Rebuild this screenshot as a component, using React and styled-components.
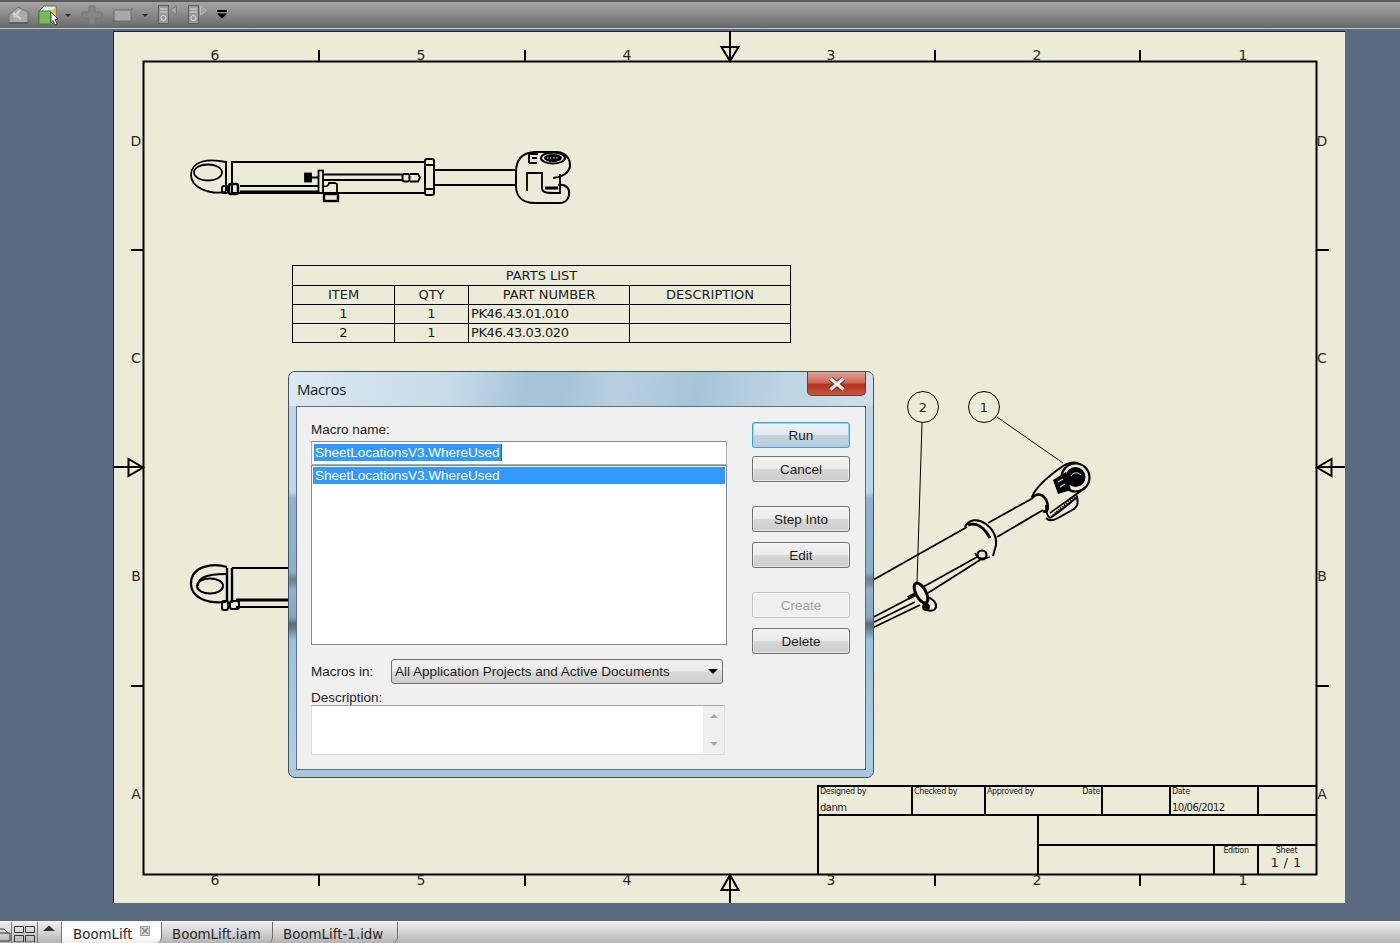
import React from 'react'
import styled, { createGlobalStyle } from 'styled-components'

const Global = createGlobalStyle`
  html, body { margin: 0; padding: 0; height: 100%; overflow: hidden; }
  #root { height: 100%; }
`;

const CAD_FONT = '"DejaVu Sans", Tahoma, sans-serif';
const UI_FONT = '"Liberation Sans", Arial, sans-serif';

const Window = styled.div`
  display: flex;
  flex-direction: column;
  width: 1400px;
  height: 943px;
  background: #5a6a7f;
  overflow: hidden;
`;

const Toolbar = styled.div`
  display: flex;
  align-items: flex-start;
  flex: none;
  box-sizing: border-box;
  height: 29px;
  padding: 3px 0 0 6px;
  background: linear-gradient(#a3a3a3 0, #8f8f8f 10px, #666 27px);
  border-top: 2px solid #5c5c5c;
  border-bottom: 1px solid #c9c9c9;
`;

const ToolSvg = styled.svg`
  flex: none;
  display: block;
  margin-left: ${p => p.$gap || 0}px;
`;

const Workspace = styled.div`
  flex: 1;
  display: flex;
  padding: 2px 0 0 113px;
`;

const Sheet = styled.div`
  position: relative;
  width: 1232px;
  height: 872px;
  background: #ecebd8;
  box-shadow: inset 1px 1px 0 #16224a;
`;

const DrawingSvg = styled.svg`
  position: absolute;
  left: 0;
  top: 0;
`;

const PartsList = styled.table`
  position: absolute;
  left: 179px;
  top: 234px;
  width: 498px;
  table-layout: fixed;
  border-collapse: collapse;
  font: 13px/17px ${CAD_FONT};
  color: #1a1a1a;
`;

const PartCell = styled.td`
  box-sizing: border-box;
  height: ${p => (p.$tall ? 20 : 19)}px;
  padding: ${p => (p.$tall ? 1 : 0)}px 0 0 ${p => (p.$left ? 2 : 0)}px;
  border: 1px solid #000;
  vertical-align: top;
  text-align: ${p => (p.$left ? 'left' : 'center')};
  letter-spacing: ${p => (p.$left ? '-0.4px' : '0')};
  white-space: nowrap;
`;

const TitleBlock = styled.div`
  position: absolute;
  left: 704px;
  top: 754px;
  box-sizing: border-box;
  width: 500px;
  height: 90px;
  border-top: 2px solid #000;
  border-left: 2px solid #000;
  font-family: ${CAD_FONT};
  color: #222;
`;

const TitleRow = styled.div`
  display: flex;
  height: ${p => p.$h}px;
  border-bottom: ${p => (p.$line ? '2px solid #000' : 'none')};
  box-sizing: border-box;
`;

const TitleCell = styled.div`
  position: relative;
  flex: none;
  box-sizing: border-box;
  width: ${p => p.$w}px;
  padding: 0 1px;
  border-right: ${p => (p.$noLine ? 'none' : '2px solid #000')};
  font-size: 8px;
  line-height: 10px;
  letter-spacing: -0.35px;
`;

const CellEnd = styled.span`
  position: absolute;
  right: 1px;
  top: 0;
`;

const CellValue = styled.div`
  font-size: 10px;
  line-height: 12px;
  margin-top: 5px;
  letter-spacing: -0.5px;
`;

const SheetNo = styled.div`
  font-size: 13px;
  line-height: 14px;
  text-align: center;
  letter-spacing: 0.4px;
  margin-left: -4px;
`;

const CenterText = styled.div`
  text-align: center;
  margin-left: ${p => p.$shift || 0}px;
`;

const TitleSplit = styled.div`
  flex: 1;
  display: flex;
  flex-direction: column;
`;

const Dialog = styled.div`
  position: absolute;
  left: 175px;
  top: 340px;
  box-sizing: border-box;
  width: 586px;
  height: 407px;
  padding: 0 7px 7px;
  display: flex;
  flex-direction: column;
  border: 1px solid #40505c;
  border-radius: 7px;
  font: 13.5px ${UI_FONT};
  color: #1c1c1c;
  background:
    linear-gradient(#a6c8df, #a6c8df) no-repeat 0 100% / 100% 8px,
    linear-gradient(#bcd7e8 0, #bcd7e8 120px, #8fb3ce 126px, #8bb0cc 200px, #6f7f8c 207px, #77919f 212px, #8db2cd 218px, #86a8bf 245px, #5c6a75 252px, #6d8494 258px, #9bc1da 268px, #aed0e5 400px);
`;

const TitleBar = styled.div`
  display: flex;
  flex: none;
  height: 34px;
  margin: 0 -7px;
  padding: 0 7px 0 8px;
  border-radius: 6px 6px 0 0;
  background: linear-gradient(100deg, #dce9f1 0, #cfe1ec 14%, #c6dbe8 28%, #a7c5d9 40%, #a3c2d6 46%, #b7d0e0 56%, #a6c4d8 70%, #bcd4e3 84%, #cfe0eb 100%);
`;

const TitleText = styled.div`
  flex: 1;
  padding-top: 9px;
  font: 15px/17px "Open Sans", ${UI_FONT};
  letter-spacing: -0.4px;
  color: #1a1a1a;
`;

const CloseButton = styled.div`
  flex: none;
  display: flex;
  align-items: center;
  justify-content: center;
  box-sizing: border-box;
  width: 59px;
  height: 24px;
  border: 1px solid #6a3a36;
  border-top: none;
  border-radius: 0 0 5px 5px;
  background: linear-gradient(#e2a59d 0, #cf6a58 45%, #b5321f 55%, #c9553f 100%);
`;

const Panel = styled.div`
  flex: 1;
  display: grid;
  grid-template-columns: 416px 98px;
  column-gap: 25px;
  box-sizing: border-box;
  padding: 15px 0 0 14px;
  background: #f0f0f0;
  border: 1px solid #5d6d7b;
`;

const LeftCol = styled.div`
  display: flex;
  flex-direction: column;
`;

const FieldLabel = styled.label`
  display: block;
  line-height: 15px;
  white-space: nowrap;
`;

const NameInput = styled.div`
  box-sizing: border-box;
  height: 24px;
  margin-top: 4px;
  padding: 2px;
  background: #fff;
  border: 1px solid #abadb3;
  border-top-color: #7f8a96;
  line-height: 17px;
`;

const Selection = styled.span`
  display: inline-block;
  height: 17px;
  padding: 0 1px;
  background: #3399ff;
  color: #fff;
  white-space: nowrap;
  border-right: 1px solid #7a4a1a;
`;

const MacroList = styled.div`
  box-sizing: border-box;
  height: 180px;
  padding: 1px;
  background: #fff;
  border: 1px solid #828790;
`;

const ListRow = styled.div`
  height: 17px;
  padding-left: 2px;
  line-height: 17px;
  background: #3399ff;
  color: #fff;
`;

const ComboRow = styled.div`
  display: flex;
  align-items: center;
  margin-top: 14px;
  height: 25px;
`;

const ComboLabel = styled.span`
  width: 80px;
  flex: none;
`;

const Combo = styled.div`
  display: flex;
  align-items: center;
  justify-content: space-between;
  box-sizing: border-box;
  width: 332px;
  height: 25px;
  padding: 0 4px 0 3px;
  border: 1px solid #707070;
  border-radius: 3px;
  background: linear-gradient(#f2f2f2 0, #ebebeb 48%, #d8d8d8 52%, #cfcfcf 100%);
  white-space: nowrap;
`;

const ComboArrow = styled.span`
  width: 0;
  height: 0;
  border-left: 5px solid transparent;
  border-right: 5px solid transparent;
  border-top: 5px solid #000;
`;

const DescLabel = styled(FieldLabel)`
  margin-top: 6px;
`;

const DescBox = styled.div`
  display: flex;
  justify-content: flex-end;
  box-sizing: border-box;
  width: 414px;
  height: 50px;
  background: #fff;
  border: 1px solid #dcdcdc;
  border-top-color: #a5a5a5;
`;

const DescScroll = styled.div`
  display: flex;
  flex-direction: column;
  align-items: center;
  justify-content: space-between;
  box-sizing: border-box;
  width: 21px;
  padding: 8px 0;
  background: #f0f0f0;
`;

const ScrollArrow = styled.span`
  width: 0;
  height: 0;
  border-left: 4px solid transparent;
  border-right: 4px solid transparent;
  ${p => (p.$up ? 'border-bottom: 4px solid #a8a8a8;' : 'border-top: 4px solid #a8a8a8;')}
`;

const ButtonCol = styled.div`
  display: flex;
  flex-direction: column;
`;

const Button = styled.div`
  display: flex;
  align-items: center;
  justify-content: center;
  box-sizing: border-box;
  height: 26px;
  margin-top: ${p => p.$top || 0}px;
  border: 1px solid ${p => (p.$primary ? '#3c9fd6' : p.$disabled ? '#c4c4c4' : '#707070')};
  border-radius: 3px;
  color: ${p => (p.$disabled ? '#a0a0a0' : '#1c1c1c')};
  background: ${p => (p.$disabled
    ? '#f0f0f0'
    : p.$primary
      ? 'linear-gradient(#edf5fa 0, #dfe9f0 48%, #c6d4de 52%, #bccbd6 100%)'
      : 'linear-gradient(#f2f2f2 0, #ebebeb 48%, #d6d6d6 52%, #cdcdcd 100%)')};
  box-shadow: ${p => (p.$primary ? 'inset 0 0 0 1px #8fd6f4' : 'inset 0 0 0 1px rgba(255,255,255,.55)')};
`;

const TabBar = styled.div`
  display: flex;
  flex: none;
  box-sizing: border-box;
  height: 22px;
  margin-top: 18px;
  border-top: 1px solid #f3f3f3;
  background: linear-gradient(#ededed 0, #d6d6d6 45%, #b4b4b4 100%);
  font: 13.4px/21px ${CAD_FONT};
  color: #262626;
`;

const TabIcons = styled.div`
  display: flex;
  flex: none;
  width: 62px;
`;

const TabIconCell = styled.div`
  flex: none;
  box-sizing: border-box;
  width: ${p => p.$w}px;
  height: 21px;
  border-right: 1px solid #777;
  overflow: hidden;
`;

const Tab = styled.div`
  display: flex;
  align-items: flex-start;
  flex: none;
  box-sizing: border-box;
  width: ${p => p.$w}px;
  height: 21px;
  padding: 2px 0 0 ${p => p.$pad}px;
  border-right: 1px solid #6c6c6c;
  border-radius: 0 0 6px 0;
  background: ${p => (p.$active ? 'linear-gradient(#fff 0, #fff 60%, #efefef 100%)' : 'transparent')};
`;

const TabClose = styled.svg`
  margin: 2px 0 0 7px;
`;

function SheetMarks() {
  const cols = [215, 421, 627, 831, 1037, 1243];
  const nums = ['6', '5', '4', '3', '2', '1'];
  const rows = [[141, 'D'], [358, 'C'], [576, 'B'], [794, 'A']];
  const tx = [319, 525, 935, 1140];
  const ty = [250, 686];
  return (
    <g>
      <rect x="143.5" y="61.5" width="1173" height="813" fill="none" stroke="#000" strokeWidth="2" />
      {tx.map(x => <path key={x} d={`M${x} 50V61M${x} 875V886`} stroke="#000" strokeWidth="2" />)}
      {ty.map(y => <path key={y} d={`M131 ${y}H143M1317 ${y}H1329`} stroke="#000" strokeWidth="2" />)}
      <g fill="none" stroke="#000" strokeWidth="2">
        <path d="M730 31V61M721.5 47H738.5L730 61Z" />
        <path d="M730 903V875M721.5 890H738.5L730 875Z" />
        <path d="M113 467H143M128.5 459V476L143 467.5Z" />
        <path d="M1345 467H1317M1331.5 459V476L1317 467.5Z" />
      </g>
      <g fontFamily={CAD_FONT} fontSize="14" fill="#2a2a2a" textAnchor="middle">
        {cols.map((x, i) => <text key={x} x={x} y="60">{nums[i]}</text>)}
        {cols.map((x, i) => <text key={x} x={x} y="885">{nums[i]}</text>)}
        {rows.map(([y, l]) => <text key={l} x="136" y={y + 5}>{l}</text>)}
        {rows.map(([y, l]) => <text key={l} x="1322" y={y + 5}>{l}</text>)}
      </g>
    </g>
  );
}

function TopCylinder() {
  return (
    <g fill="none" stroke="#000" strokeWidth="1.8">
      <path d="M226 162C208 158 191 161 191 175C191 187 208 195 226 192" />
      <ellipse cx="208" cy="172.5" rx="14" ry="8" />
      <path d="M226 161V191M232 161V193" strokeWidth="2" />
      <path d="M232 162H425M232 193H425" />
      <path d="M240 186H319M240 191.5H319" />
      <rect x="222" y="186" width="6" height="7" rx="2" />
      <rect x="229" y="184" width="9" height="10" rx="2" strokeWidth="2.4" />
      <rect x="305" y="173.5" width="6" height="8" fill="#000" />
      <path d="M311 177.5H318M323 174.5H402M323 180H402" />
      <rect x="318.5" y="170.5" width="4.5" height="22.5" />
      <rect x="402.5" y="174" width="7" height="7.5" rx="2" strokeWidth="2" />
      <path d="M410 174H418L420 177.5L418 181.5H410" />
      <path d="M323 186C326 187 329 186 329 183H335L337 184V194H323" />
      <rect x="324" y="194" width="14" height="7" strokeWidth="2.4" />
      <rect x="425" y="159" width="9" height="36" rx="2" strokeWidth="2" />
      <path d="M425 165H434M425 189H434" strokeWidth="2" />
      <path d="M434 170H516M434 185H516" />
      <path d="M516 172C516 160 521 153 534 152H556C565 152 570 158 570 165C570 172 563 177 553 178" strokeWidth="2" />
      <path d="M516 172V186C516 196 522 203 535 203H559C567 203 570 197 569 191C568 186 563 184 558 185" strokeWidth="2" />
      <path d="M527 191V173H542V189C543 193 546 193 560 193V174" />
      <path d="M545 188H558" strokeWidth="3" />
      <path d="M529 163V154H538M529 163H537M532 158H537" strokeWidth="2" />
      <ellipse cx="553" cy="158" rx="12" ry="5.5" strokeWidth="2" />
      <ellipse cx="553" cy="158" rx="9" ry="4" fill="#000" stroke="none" />
      <path d="M547 158H559" stroke="#ecebd8" strokeWidth="1" strokeDasharray="1.5 1.5" />
    </g>
  );
}

function LowerCylinder() {
  return (
    <g fill="none" stroke="#000" strokeWidth="2">
      <path d="M227 567C214 563 191 565 191 584C191 598 208 604 226 602" strokeWidth="2.2" />
      <path d="M198 586C198 578 205 574 226 574" />
      <ellipse cx="210" cy="586" rx="13" ry="7.5" />
      <path d="M227 568V602M232 568V603" strokeWidth="2.4" />
      <path d="M232 568H290" />
      <path d="M236 600H290" strokeWidth="3" />
      <path d="M236 607H290" strokeWidth="2" />
      <rect x="222" y="601" width="6" height="9" rx="2" />
      <rect x="230" y="601" width="9" height="8" rx="2" />
    </g>
  );
}

function IsoCylinder() {
  return (
    <g fill="none" stroke="#000" strokeWidth="1.8">
      <path d="M866 584L967 527M866 621L912 597M923 587L977 557M866 626L915 602M866 631L920 605M928 593L980 560" />
      <path d="M965 527C969 519 978 518 986 524C993 529 997 537 996 545L993 556" strokeWidth="2" />
      <path d="M968 525C976 522 984 527 990 538" strokeWidth="2.8" />
      <path d="M975 553C978 560 984 559 990 557" />
      <circle cx="982" cy="555" r="4.5" strokeWidth="2.2" />
      <path d="M988 523L1033 498M997 537L1043 510" />
      <path d="M1032 497C1036 486 1050 475 1063 466C1068 463 1074 462 1078 463" strokeWidth="2" />
      <path d="M1032 498C1037 492 1044 494 1047 502C1049 509 1047 513 1043 511" strokeWidth="2.6" />
      <path d="M1046 505C1046 512 1047 516 1050 518" />
      <path d="M1050 518C1060 512 1072 501 1077 497C1078 503 1078 506 1074 509L1058 518C1053 521 1049 521 1046 518" strokeWidth="2" />
      <path d="M1082 490L1050 513" strokeWidth="1.6" />
      <path d="M1084 488L1052 516" strokeWidth="1.8" strokeDasharray="1.5 1" />
      <circle cx="1075.5" cy="477.5" r="14" strokeWidth="2.2" />
      <circle cx="1075.5" cy="477" r="10" fill="#000" stroke="none" />
      <path d="M1071 476C1073 472 1078 472 1081 475" stroke="#ecebd8" strokeWidth="1" />
      <path d="M1053 480L1066 472L1071 490L1058 494Z" fill="#000" stroke="none" />
      <path d="M1058 482L1063 479M1060 487L1065 484" stroke="#ecebd8" strokeWidth="1.2" />
      <ellipse cx="921" cy="593" rx="5" ry="11" transform="rotate(-28 921 593)" strokeWidth="3" />
      <path d="M908 598L916 594" strokeWidth="4" />
      <path d="M927 597C932 598 937 603 936 607C935 611 929 612 926 609" strokeWidth="2" />
      <circle cx="926" cy="607" r="3" fill="#000" />
    </g>
  );
}

function Balloons() {
  return (
    <g>
      <g fill="none" stroke="#000" strokeWidth="1">
        <circle cx="984" cy="407" r="15.5" />
        <circle cx="923" cy="407" r="15.5" />
        <path d="M997 417L1063 463M922 423L917 583" />
      </g>
      <g fontFamily={CAD_FONT} fontSize="13" fill="#2a2a2a" textAnchor="middle">
        <text x="984" y="412">1</text>
        <text x="923" y="412">2</text>
      </g>
    </g>
  );
}

function ToolIcons() {
  return (
    <>
      <ToolSvg width="22" height="20" viewBox="0 0 22 20" $gap={1}>
        <path d="M2 10L11 2L21 7V18H2Z" fill="#a9a9a9" stroke="#6e6e6e" />
        <path d="M6 8L14 14M13 5L7 12" stroke="#d0d0d0" strokeWidth="2.6" />
        <path d="M2 18H21" stroke="#4f4f4f" strokeWidth="1.4" />
      </ToolSvg>
      <ToolSvg width="23" height="20" viewBox="0 0 23 20" $gap={9}>
        <path d="M1 6L6 1H18V15L14 19H1Z" fill="#ececec" stroke="#666" />
        <rect x="1" y="6" width="12" height="13" fill="#7bb761" stroke="#318a22" />
        <path d="M13 6L18 2V15L13 19Z" fill="#dcc23c" />
        <path d="M13 7L20 14L17 14.5L19 19L17 20L15 15.5L13 18Z" fill="#fff" stroke="#222" strokeWidth="0.8" />
      </ToolSvg>
      <ToolSvg width="8" height="20" viewBox="0 0 8 20" $gap={3}>
        <path d="M1 9H7L4 12Z" fill="#2c2c2c" />
      </ToolSvg>
      <ToolSvg width="22" height="20" viewBox="0 0 22 20" $gap={9}>
        <path d="M8 1H14V7H21V13H14V19H8V13H1V7H8Z" fill="#858585" stroke="#777" />
      </ToolSvg>
      <ToolSvg width="22" height="20" viewBox="0 0 22 20" $gap={9}>
        <rect x="2" y="5" width="17" height="11" fill="#a8a8a8" stroke="#6f6f6f" />
        <path d="M0 16H3M19 4H21" stroke="#5e5e5e" />
      </ToolSvg>
      <ToolSvg width="8" height="20" viewBox="0 0 8 20" $gap={7}>
        <path d="M1 9H7L4 12Z" fill="#2c2c2c" />
      </ToolSvg>
      <ToolSvg width="22" height="20" viewBox="0 0 22 20" $gap={8}>
        <rect x="1.5" y="0.5" width="10" height="18" fill="#999" stroke="#5f5f5f" />
        <path d="M3 4H10M3 7H10" stroke="#dcdcdc" />
        <circle cx="6.5" cy="13" r="2.6" fill="none" stroke="#e0e0e0" />
        <path d="M19.5 1L13 5.5L19.5 10Z" fill="#a4a4a4" stroke="#777" />
      </ToolSvg>
      <ToolSvg width="22" height="20" viewBox="0 0 22 20" $gap={8}>
        <rect x="1.5" y="0.5" width="10" height="18" fill="#999" stroke="#5f5f5f" />
        <path d="M3 4H10M3 7H10" stroke="#dcdcdc" />
        <circle cx="6.5" cy="13" r="2.6" fill="none" stroke="#e0e0e0" />
        <path d="M13.5 1L19.5 5.5L13.5 10Z" fill="#a0a0a0" stroke="#bbb" />
      </ToolSvg>
      <ToolSvg width="12" height="20" viewBox="0 0 12 20" $gap={7}>
        <path d="M1 5H11V7H1ZM1 8.5H11L6 13.5Z" fill="#000" />
      </ToolSvg>
    </>
  );
}

function TabBarIcons() {
  return (
    <TabIcons>
      <TabIconCell $w={12}>
        <svg width="11" height="20" viewBox="0 0 11 20">
          <path d="M-4 7H4L8 11H10V19H-4ZM-4 11H8" fill="none" stroke="#333" />
        </svg>
      </TabIconCell>
      <TabIconCell $w={26}>
        <svg width="25" height="20" viewBox="0 0 25 20">
          <path d="M2.5 4.5H11.5V10.5H2.5ZM13.5 4.5H22.5V10.5H13.5ZM2.5 13.5H11.5V20H2.5ZM13.5 13.5H22.5V20H13.5Z" fill="none" stroke="#333" />
        </svg>
      </TabIconCell>
      <TabIconCell $w={24}>
        <svg width="23" height="20" viewBox="0 0 23 20">
          <path d="M5 9L11 3.5L17 9Z" fill="#333" />
        </svg>
      </TabIconCell>
    </TabIcons>
  );
}

export default function App() {
  return (
    <Window>
      <Global />
      <Toolbar>
        <ToolIcons />
      </Toolbar>
      <Workspace>
        <Sheet>
          <DrawingSvg width="1232" height="872" viewBox="113 31 1232 872">
            <SheetMarks />
            <TopCylinder />
            <LowerCylinder />
            <IsoCylinder />
            <Balloons />
          </DrawingSvg>
          <PartsList>
            <colgroup>
              <col width="102" />
              <col width="74" />
              <col width="161" />
              <col width="161" />
            </colgroup>
            <tbody>
              <tr><PartCell colSpan={4} $tall>PARTS LIST</PartCell></tr>
              <tr>
                <PartCell>ITEM</PartCell>
                <PartCell>QTY</PartCell>
                <PartCell>PART NUMBER</PartCell>
                <PartCell>DESCRIPTION</PartCell>
              </tr>
              <tr>
                <PartCell>1</PartCell>
                <PartCell>1</PartCell>
                <PartCell $left>PK46.43.01.010</PartCell>
                <PartCell />
              </tr>
              <tr>
                <PartCell>2</PartCell>
                <PartCell>1</PartCell>
                <PartCell $left>PK46.43.03.020</PartCell>
                <PartCell />
              </tr>
            </tbody>
          </PartsList>
          <TitleBlock>
            <TitleRow $h={29} $line>
              <TitleCell $w={94}>Designed by<CellValue>danm</CellValue></TitleCell>
              <TitleCell $w={73}>Checked by</TitleCell>
              <TitleCell $w={117}>Approved by<CellEnd>Date</CellEnd></TitleCell>
              <TitleCell $w={68} />
              <TitleCell $w={88}>Date<CellValue>10/06/2012</CellValue></TitleCell>
              <TitleCell $w={58} $noLine />
            </TitleRow>
            <TitleRow $h={59}>
              <TitleCell $w={220} />
              <TitleSplit>
                <TitleRow $h={30} $line />
                <TitleRow $h={29}>
                  <TitleCell $w={176} />
                  <TitleCell $w={44}><CenterText>Edition</CenterText></TitleCell>
                  <TitleCell $w={58} $noLine>
                    <CenterText $shift={-3}>Sheet</CenterText>
                    <SheetNo>1 / 1</SheetNo>
                  </TitleCell>
                </TitleRow>
              </TitleSplit>
            </TitleRow>
          </TitleBlock>
          <Dialog>
            <TitleBar>
              <TitleText>Macros</TitleText>
              <CloseButton>
                <svg width="20" height="14" viewBox="0 0 20 14">
                  <path d="M3.5 1.5L16.5 12.5M16.5 1.5L3.5 12.5" stroke="#4a2a28" strokeWidth="5" />
                  <path d="M3.5 1.5L16.5 12.5M16.5 1.5L3.5 12.5" stroke="#f4efee" strokeWidth="3.4" />
                </svg>
              </CloseButton>
            </TitleBar>
            <Panel>
              <LeftCol>
                <FieldLabel>Macro name:</FieldLabel>
                <NameInput><Selection>SheetLocationsV3.WhereUsed</Selection></NameInput>
                <MacroList><ListRow>SheetLocationsV3.WhereUsed</ListRow></MacroList>
                <ComboRow>
                  <ComboLabel>Macros in:</ComboLabel>
                  <Combo>
                    All Application Projects and Active Documents
                    <ComboArrow />
                  </Combo>
                </ComboRow>
                <DescLabel>Description:</DescLabel>
                <DescBox>
                  <DescScroll>
                    <ScrollArrow $up />
                    <ScrollArrow />
                  </DescScroll>
                </DescBox>
              </LeftCol>
              <ButtonCol>
                <Button $primary>Run</Button>
                <Button $top={8}>Cancel</Button>
                <Button $top={24}>Step Into</Button>
                <Button $top={10}>Edit</Button>
                <Button $top={24} $disabled>Create</Button>
                <Button $top={10}>Delete</Button>
              </ButtonCol>
            </Panel>
          </Dialog>
        </Sheet>
      </Workspace>
      <TabBar>
        <TabBarIcons />
        <Tab $w={100} $pad={11} $active>
          BoomLift
          <TabClose width="10" height="10" viewBox="0 0 10 10">
            <rect x="0.5" y="0.5" width="9" height="9" fill="#ddd" stroke="#999" />
            <path d="M2 2L8 8M8 2L2 8" stroke="#888" strokeWidth="1.6" />
          </TabClose>
        </Tab>
        <Tab $w={111} $pad={10}>BoomLift.iam</Tab>
        <Tab $w={125} $pad={10}>BoomLift-1.idw</Tab>
      </TabBar>
    </Window>
  );
}
